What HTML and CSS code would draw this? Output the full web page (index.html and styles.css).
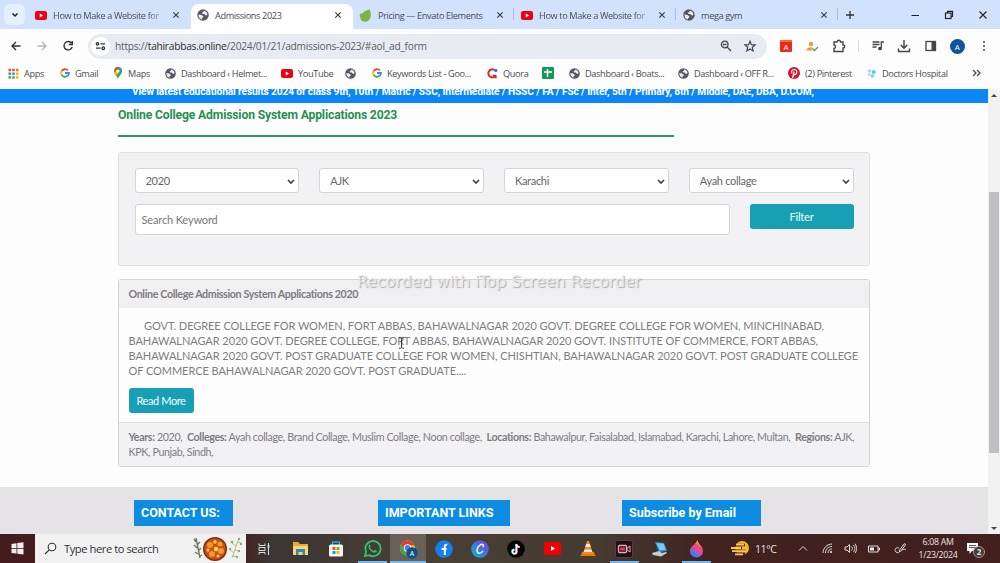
FILE: index.html
```html
<!DOCTYPE html>
<html lang="en">
<head>
    <meta charset="UTF-8">
    <meta name="viewport" content="width=device-width, initial-scale=1.0">
    <title>Admissions 2023</title>
    <link rel="stylesheet" href="styles.css">
</head>
<body>
    <!-- shared icons -->
    <svg class="sprite" width="0" height="0">
        <symbol id="youtube" viewBox="0 0 24 18"><rect width="24" height="18" rx="4" fill="#f00010"/><path d="M9.500 5v8l7-4z" fill="#fff"/></symbol>
        <symbol id="globe" viewBox="0 0 24 24"><circle cx="12" cy="12" r="11.500" fill="#55585c"/><path d="M3 11l6 1 4 3-1 2-2 1v3C5 20 2.500 16 3 11zM13 3c4 .5 7 3 8 7.500l-2 2.500-3-1-1-2h-4l-1-3 3-1z" fill="#e8edf7"/></symbol>
        <symbol id="google" viewBox="0 0 24 24" fill="none" stroke-width="4.400"><path d="M19 6A9.300 9.300 0 0 0 4 7.500" stroke="#ea4335"/><path d="M4 7.500a9.300 9.300 0 0 0 0 9" stroke="#fbbc05"/><path d="M4 16.500a9.300 9.300 0 0 0 14 2.500" stroke="#34a853"/><path d="M18 19a9 9 0 0 0 3.300-7H12" stroke="#4285f4"/></symbol>
        <symbol id="close" viewBox="0 0 10 10"><path d="M2.300 2.300l5.400 5.400M7.700 2.300l-5.400 5.400" stroke="#3c4043" stroke-width="1.200"/></symbol>
    </svg>

    <div class="tabs">
        <div class="tab-search"><svg width="8" height="6" viewBox="0 0 8 6"><path d="M1.500 1.500L4 4l2.500-2.500" fill="none" stroke="#222" stroke-width="1.500"/></svg></div>
        <div class="tab">
            <svg class="fav" width="12" height="9"><use href="#youtube"/></svg>
            <span class="tab-title fade">How to Make a Website for</span>
            <svg width="10" height="10"><use href="#close"/></svg>
        </div>
        <div class="tab active">
            <svg class="fav" width="12" height="12"><use href="#globe"/></svg>
            <span class="tab-title">Admissions 2023</span>
            <svg width="10" height="10"><use href="#close"/></svg>
        </div>
        <div class="tab line">
            <svg class="fav" width="13" height="13" viewBox="0 0 13 13"><path d="M10.500.5C12.500 3 12.800 11 8 12.500 4 13.500 1 11.500 1.500 8 2 4 6 1.500 10.500.5z" fill="#7cb342"/><path d="M.5 6l1.500-2 1 2-1.500 3z" fill="#7cb342"/></svg>
            <span class="tab-title">Pricing — Envato Elements</span>
            <svg width="10" height="10"><use href="#close"/></svg>
        </div>
        <div class="tab line">
            <svg class="fav" width="12" height="9"><use href="#youtube"/></svg>
            <span class="tab-title fade">How to Make a Website for</span>
            <svg width="10" height="10"><use href="#close"/></svg>
        </div>
        <div class="tab line">
            <svg class="fav" width="12" height="12"><use href="#globe"/></svg>
            <span class="tab-title">mega gym</span>
            <svg width="10" height="10"><use href="#close"/></svg>
        </div>
        <svg class="new-tab" width="10" height="10" viewBox="0 0 10 10"><path d="M5 1v8M1 5h8" stroke="#333" stroke-width="1.300"/></svg>
        <div class="window-buttons">
            <svg width="10" height="10" viewBox="0 0 10 10"><path d="M1.500 5.500h7.500" stroke="#222"/></svg>
            <svg width="10" height="10" viewBox="0 0 10 10" fill="none" stroke="#222" stroke-width="1.200"><rect x="1.500" y="3" width="5.500" height="5.500"/><path d="M3.500 3V1.300h5v5.200H7"/></svg>
            <svg width="10" height="10" viewBox="0 0 10 10"><path d="M1.500 1.500l7 7M8.500 1.500l-7 7" stroke="#222" stroke-width="1.100"/></svg>
        </div>
    </div>

    <div class="toolbar">
        <div class="nav">
            <svg width="12" height="12" viewBox="0 0 12 12" fill="none" stroke="#333" stroke-width="1.400"><path d="M10.500 6H2M6 2L2 6l4 4"/></svg>
            <svg width="12" height="12" viewBox="0 0 12 12" fill="none" stroke="#b0b3b7" stroke-width="1.300"><path d="M1.500 6H10M6 2l4 4-4 4"/></svg>
            <svg width="12" height="12" viewBox="0 0 12 12" fill="none" stroke="#333" stroke-width="1.400"><path d="M9.600 3.200A4.200 4.200 0 1 0 10.200 7M10.300 1v3.500H6.800"/></svg>
        </div>
        <div class="address">
            <span class="site-info"><svg width="11" height="10" viewBox="0 0 11 10" fill="none" stroke="#333" stroke-width="1.300"><circle cx="2.500" cy="2.800" r="1.200"/><path d="M5.500 2.800H10M1 7.200h4.500"/><circle cx="8.300" cy="7.200" r="1.300"/></svg></span>
            <span class="url">https://<b>tahirabbas.online</b>/2024/01/21/admissions-2023/#aol_ad_form</span>
            <svg width="12" height="12" viewBox="0 0 12 12" fill="none" stroke="#444" stroke-width="1.300"><circle cx="4.700" cy="4.500" r="3.300"/><path d="M7 7l4 4M3 4.500h3.400"/></svg>
            <svg class="star" width="12" height="12" viewBox="0 0 13 13" fill="none" stroke="#444" stroke-width="1.300"><path d="M6.500 1.300L8 5l4 .3-3 2.600.9 3.900-3.400-2.100-3.400 2.100L4 7.900 1 5.300 5 5z"/></svg>
        </div>
        <div class="extensions">
            <svg width="14" height="14" viewBox="0 0 14 14"><rect x="1" y="1" width="12" height="12" rx="1" fill="#e8291c"/><path d="M1 2h12" stroke="#f58a1f" stroke-width="1.500"/><text x="7" y="10.500" text-anchor="middle" font-size="8" fill="#fff">A</text></svg>
            <svg width="14" height="14" viewBox="0 0 14 14"><circle cx="6" cy="5" r="2.200" fill="#f29b2c"/><path d="M1.500 11.500c0-4.500 8-4.500 8 0z" fill="#f29b2c"/><path d="M7.500 9.500l2 2 3.500-3.500" fill="none" stroke="#fff" stroke-width="3"/><path d="M7.500 9.500l2 2 3.500-3.500" fill="none" stroke="#36a269" stroke-width="1.300"/></svg>
            <svg width="14" height="14" viewBox="0 0 14 14" fill="none" stroke="#444" stroke-width="1.400"><path d="M2 3h3c0-2.300 3.500-2.300 3.500 0H11v3c2.300 0 2.300 3 0 3v3.500H2V9.500c2 0 2-3.500 0-3.500z"/></svg>
            <i class="divider"></i>
            <svg width="14" height="14" viewBox="0 0 14 14" fill="none" stroke="#444" stroke-width="1.300"><path d="M1.500 3h7M1.500 5.500h7M1.500 8h4M10.300 9.500V3H13"/><circle cx="9" cy="9.500" r="1.200" fill="#444"/></svg>
            <svg width="14" height="14" viewBox="0 0 14 14" fill="none" stroke="#444" stroke-width="1.400"><path d="M7 1v8M3.700 6L7 9.200 10.300 6M1.500 9.500v3h11v-3"/></svg>
            <svg width="14" height="14" viewBox="0 0 14 14"><rect x="2" y="2.500" width="9.500" height="9" fill="none" stroke="#444" stroke-width="1.300"/><path d="M7.500 2.500h4v9h-4z" fill="#444"/></svg>
            <span class="avatar">A</span>
            <svg class="dots" width="4" height="12" viewBox="0 0 4 12" fill="#444"><circle cx="2" cy="2" r="1"/><circle cx="2" cy="6" r="1"/><circle cx="2" cy="10" r="1"/></svg>
        </div>
    </div>

    <div class="bookmarks">
        <span><svg width="11" height="11" viewBox="0 0 11 11"><path d="M.5 2h2.500" stroke="#ea4335" stroke-width="2.500"/><path d="M4.200 2h2.500" stroke="#ea4335" stroke-width="2.500"/><path d="M8 2h2.500" stroke="#f36c3c" stroke-width="2.500"/><path d="M.5 5.700h2.500" stroke="#34a853" stroke-width="2.500"/><path d="M4.200 5.700h2.500" stroke="#4285f4" stroke-width="2.500"/><path d="M8 5.700h2.500" stroke="#fbbc05" stroke-width="2.500"/><path d="M.5 9.400h2.500" stroke="#34a853" stroke-width="2.500"/><path d="M4.200 9.400h2.500" stroke="#55a055" stroke-width="2.500"/><path d="M8 9.400h2.500" stroke="#fbbc05" stroke-width="2.500"/></svg><em>Apps</em></span>
        <span><svg width="10" height="10"><use href="#google"/></svg><em>Gmail</em></span>
        <span><svg width="10" height="12" viewBox="0 0 10 12"><path d="M5 12C4 8.500 1 7.500 1 4a4 4 0 0 1 8 0c0 3.500-3 4.500-4 8z" fill="#34a853"/><path d="M1.900 1.500A4 4 0 0 1 6.500.3L3 5z" fill="#ea4335"/><path d="M6.500.3A4 4 0 0 1 9 4L6.500 4z" fill="#4285f4"/><path d="M1.300 5.500L4 3l2 3-3.300 2.500z" fill="#fbbc05"/><circle cx="5" cy="4" r="1.500" fill="#fff"/></svg><em>Maps</em></span>
        <span><svg width="11" height="11"><use href="#globe"/></svg><em>Dashboard ‹ Helmet...</em></span>
        <span><svg width="12" height="9"><use href="#youtube"/></svg><em>YouTube</em></span>
        <span><svg width="11" height="11"><use href="#globe"/></svg></span>
        <span><svg width="10" height="10"><use href="#google"/></svg><em>Keywords List - Goo...</em></span>
        <span><svg width="11" height="11" viewBox="0 0 11 11"><path d="M7.500 2A4 4 0 1 0 9 7M6 7l3.500 3" fill="none" stroke="#d32a2f" stroke-width="2"/><circle cx="8.800" cy="2.500" r="1.700" fill="#3b78e7"/></svg><em>Quora</em></span>
        <span><svg width="12" height="12" viewBox="0 0 12 12"><rect width="12" height="12" rx="1" fill="#159957"/><path d="M5.500 2v8M2 5h8" stroke="#fff" stroke-width="1.500"/></svg></span>
        <span><svg width="11" height="11"><use href="#globe"/></svg><em>Dashboard ‹ Boats...</em></span>
        <span><svg width="11" height="11"><use href="#globe"/></svg><em>Dashboard ‹ OFF R...</em></span>
        <span><svg width="12" height="12" viewBox="0 0 12 12"><circle cx="6" cy="6" r="6" fill="#d5122c"/><path d="M4.600 11l1.600-6.500M4 6.500C2.500 3.500 5 2.500 6.300 2.500c2.500 0 3 2 2.200 3.700-.7 1.700-2.300 1.700-2.800.7" fill="none" stroke="#fff" stroke-width="1.200"/></svg><em>(2) Pinterest</em></span>
        <span><svg width="11" height="11" viewBox="0 0 11 11"><circle cx="3.500" cy="3" r="1.800" fill="#8fe3e4"/><circle cx="7.800" cy="4" r="1.900" fill="#46cfe0"/><circle cx="6.500" cy="8" r="1.900" fill="#8cd9e8"/><circle cx="3.200" cy="6.500" r="1.500" fill="#efc0dc"/></svg><em>Doctors Hospital</em></span>
        <span><svg width="9" height="8" viewBox="0 0 9 8" fill="none" stroke="#444" stroke-width="1.200"><path d="M1 1l3 3-3 3M5 1l3 3-3 3"/></svg></span>
    </div>

    <div class="viewport">
        <div class="page">
            <div class="banner"><p>View latest educational results 2024 of class 9th, 10th / Matric / SSC, Intermediate / HSSC / FA / FSc / Inter, 5th / Primary, 8th / Middle, DAE, DBA, D.COM,</p></div>
            <div class="container">
                <h2>Online College Admission System Applications 2023</h2>
                <form class="filter">
                    <div class="select"><select><option>2020</option></select><svg width="8" height="6" viewBox="0 0 8 6"><path d="M1 1l3 3 3-3" /></svg></div>
                    <div class="select"><select><option>AJK</option></select><svg width="8" height="6" viewBox="0 0 8 6"><path d="M1 1l3 3 3-3" /></svg></div>
                    <div class="select"><select><option>Karachi</option></select><svg width="8" height="6" viewBox="0 0 8 6"><path d="M1 1l3 3 3-3" /></svg></div>
                    <div class="select"><select><option>Ayah collage</option></select><svg width="8" height="6" viewBox="0 0 8 6"><path d="M1 1l3 3 3-3" /></svg></div>
                    <div class="search-row">
                        <input type="text" placeholder="Search Keyword">
                        <button type="button" class="btn">Filter</button>
                    </div>
                </form>
                <div class="card">
                    <div class="card-header">Online College Admission System Applications 2020</div>
                    <div class="card-body">
                        <p><span class="indent">GOVT. DEGREE COLLEGE FOR WOMEN, FORT ABBAS, BAHAWALNAGAR 2020 GOVT. DEGREE COLLEGE FOR WOMEN, MINCHINABAD,</span><br>
                        BAHAWALNAGAR 2020 GOVT. DEGREE COLLEGE, FORT ABBAS, BAHAWALNAGAR 2020 GOVT. INSTITUTE OF COMMERCE, FORT ABBAS,<br>
                        BAHAWALNAGAR 2020 GOVT. POST GRADUATE COLLEGE FOR WOMEN, CHISHTIAN, BAHAWALNAGAR 2020 GOVT. POST GRADUATE COLLEGE<br>
                        OF COMMERCE BAHAWALNAGAR 2020 GOVT. POST GRADUATE....</p>
                        <button type="button" class="btn">Read More</button>
                    </div>
                    <div class="card-footer"><b>Years:</b> 2020,&nbsp; <b>Colleges:</b> Ayah collage, Brand Collage, Muslim Collage, Noon collage,&nbsp; <b>Locations:</b> Bahawalpur, Faisalabad, Islamabad, Karachi, Lahore, Multan,&nbsp; <b>Regions:</b> AJK,<br>KPK, Punjab, Sindh,</div>
                </div>
            </div>
            <div class="footer">
                <h3>CONTACT US:</h3>
                <h3>IMPORTANT LINKS</h3>
                <h3>Subscribe by Email</h3>
            </div>
        </div>
        <div class="scrollbar"><i class="up"></i><i class="thumb"></i><i class="down"></i></div>
        <div class="watermark">Recorded with iTop Screen Recorder</div>
        <svg class="cursor" width="7" height="12" viewBox="0 0 7 12" fill="none" stroke="#333"><path d="M1 .8h1.500l1 .7 1-.7H6M3.500 1.500v9M1 11.200h1.500l1-.7 1 .7H6"/></svg>
    </div>

    <div class="taskbar">
        <div class="start"><svg width="13" height="13" viewBox="0 0 13 13" fill="#eee"><path d="M.5 2l5-.8V6h-5zM6.300 1L12.500.2V6H6.300zM.5 6.800h5v4.800l-5-.7zM6.300 6.800h6.200v5.800l-6.200-.9z"/></svg></div>
        <div class="search">
            <svg width="13" height="13" viewBox="0 0 13 13" fill="none" stroke="#333" stroke-width="1.100"><circle cx="8" cy="5" r="3.800"/><path d="M5.200 7.800L1 12"/></svg>
            <span>Type here to search</span>
            <svg class="soup" width="50" height="27" viewBox="0 0 50 27">
                <path d="M3 3l4 20M3 7L1 4M4 10l3-3M4 13l-3-3M5 16l3-3M5 19l-3-2M6 22l3-2" stroke="#6b7a55" stroke-width="1.400"/>
                <path d="M46 3l-7 20M45 7l3 1M43 11l-4-3M42 15l4 1M41 18l-4-3M40 21l4 1" stroke="#b3bf86" stroke-width="1"/>
                <g fill="#94a862"><circle cx="46" cy="4" r="1.200"/><circle cx="48" cy="9" r="1.200"/><circle cx="39" cy="7" r="1.300"/><circle cx="46" cy="16" r="1.200"/><circle cx="37" cy="14" r="1.200"/><circle cx="44" cy="22" r="1.200"/></g>
                <circle cx="22" cy="14" r="12" fill="#7a2f1a"/><circle cx="22" cy="14" r="10.500" fill="#d04e14"/>
                <g fill="#f39a25"><circle cx="17" cy="10" r="3"/><circle cx="27" cy="9" r="2.500"/><circle cx="28" cy="16" r="3"/><circle cx="19" cy="19" r="3"/></g>
                <g fill="#ffd76a"><circle cx="22" cy="7" r="1.700"/><circle cx="23" cy="14" r="2.200"/><circle cx="15" cy="15" r="1.500"/><circle cx="25" cy="21" r="1.500"/></g>
            </svg>
        </div>
        <div class="apps">
            <span><svg width="14" height="12" viewBox="0 0 14 12" fill="none" stroke="#ddd"><path d="M2 .5v2h6v-2M2 11.500v-2h6v2M2 4.500h6v3H2zM11.500 0v12"/><path d="M10.500 3.500h2" stroke-width="2"/></svg></span>
            <span><svg width="17" height="15" viewBox="0 0 17 15"><path d="M1 1h5l2 2h8v11H1z" fill="#e8ac32"/><path d="M1 5h15v9H1z" fill="#ffd567"/><path d="M4 14V8h9v6h-2.500v-3h-4v3z" fill="#2b86d9"/></svg></span>
            <span><svg width="16" height="17" viewBox="0 0 16 17"><path d="M4.500 5V2h7v3" fill="none" stroke="#31a7e5" stroke-width="1.300"/><rect x="1" y="4.500" width="14" height="12" rx="1.500" fill="#f5f5f5"/><path d="M4.500 7h3v3h-3z" fill="#f25022"/><path d="M8.500 7h3v3h-3z" fill="#7fba00"/><path d="M4.500 11h3v3h-3z" fill="#00a4ef"/><path d="M8.500 11h3v3h-3z" fill="#ffb900"/></svg></span>
            <span class="open"><svg width="19" height="19" viewBox="0 0 20 20"><path d="M2 18l1.300-4.500A8 8 0 1 1 6.500 17z" fill="none" stroke="#2fc566" stroke-width="1.900"/><path d="M7 5.500l1.200 2.300-1 1.200c.8 1.700 2 2.800 3.800 3.500l1.200-1.300 2.300 1.200c-.3 2-2 2.300-3.500 1.800C8 13.200 6.500 11 6 9c-.4-1.600.1-2.800 1-3.500z" fill="#2fc566"/></svg></span>
            <span class="open current"><svg width="20" height="20" viewBox="0 0 20 20"><circle cx="9.500" cy="9" r="7.500" fill="#f4c430"/><path d="M3 5.300a7.500 7.500 0 0 1 13.500 1.200H9.500L6 11z" fill="#e8392f"/><path d="M3 5.300l6.500 11.200A7.500 7.500 0 0 1 3 5.300z" fill="#35a853"/><circle cx="9.500" cy="9" r="3.800" fill="#fff"/><circle cx="9.500" cy="9" r="2.900" fill="#4285f4"/><circle cx="14" cy="14" r="5.800" fill="#124f88"/><text x="14" y="16.500" text-anchor="middle" font-size="7" fill="#fff">A</text></svg></span>
            <span><svg width="18" height="18" viewBox="0 0 18 18"><circle cx="9" cy="9" r="8.800" fill="#1380ed"/><path d="M9.800 15V6.500c0-1.500.7-2 2.400-1.800M6.500 9h5" fill="none" stroke="#fff" stroke-width="2"/></svg></span>
            <span><svg width="18" height="18" viewBox="0 0 18 18"><defs><linearGradient id="canva" x1="0" y1="1" x2="1" y2="0"><stop stop-color="#00bfd0"/><stop offset=".45" stop-color="#397be0"/><stop offset="1" stop-color="#8138dc"/></linearGradient></defs><circle cx="9" cy="9" r="8.800" fill="url(#canva)"/><path d="M12 7c1.500-2.500-1-3.500-3-2C5.500 7.500 5 13 8 13.300c1.700.1 3-1 4-2.500" fill="none" stroke="#fff" stroke-width="1.400"/></svg></span>
            <span><svg width="18" height="18" viewBox="0 0 18 18" fill="none"><circle cx="9" cy="9" r="8.800" fill="#050505"/><path d="M9 4v7.500a2 2 0 1 1-2-2M9 4c.3 2 1.700 3 3.500 3" stroke="#25d6d6" stroke-width="1.800"/><path d="M10 4.500V12a2 2 0 1 1-2-2M10 4.500c.3 2 1.500 2.700 3 2.700" stroke="#ee2e57" stroke-width="1.600"/><path d="M9.500 4v7.700a2 2 0 1 1-2-2M9.500 4c.3 2 1.500 3 3.200 3" stroke="#fff" stroke-width="1.500"/></svg></span>
            <span><svg width="17" height="13" viewBox="0 0 17 13"><rect width="17" height="13" rx="2" fill="#f00000"/><path d="M7 4v5l4-2.500z" fill="#fff"/></svg></span>
            <span><svg width="16" height="17" viewBox="0 0 16 17"><path d="M2 12h12l1.500 4H.5z" fill="#ef7900"/><path d="M7 1h2l4 13H3z" fill="#f38a1b"/><path d="M6.200 4h3.600l1 3H5.200zM4.500 9.500h7l.8 2.500H3.700z" fill="#e8e8e8"/></svg></span>
            <span class="open"><svg width="18" height="18" viewBox="0 0 18 18"><rect x=".5" y=".5" width="17" height="17" rx="2" fill="#17151b" stroke="#7a2c33"/><rect x="3.500" y="5.500" width="8" height="7" rx="1" fill="none" stroke="#f3a5ac" stroke-width="1.300"/><path d="M12 8l3-2v6l-3-2z" fill="none" stroke="#f3a5ac"/><path d="M5 7.500h5v3H5z" fill="#e43c50"/></svg></span>
            <span><svg width="18" height="16" viewBox="0 0 18 16"><path d="M4 1l9 1 3 8-8 1z" fill="#2f8fd8"/><path d="M5.500 2l7 .8 2.300 6-6 .8z" fill="#76c8f7"/><path d="M1 12l7-2 3 2 4-1 1 1-6 3.500-8-1.500z" fill="#c3ccd3"/></svg></span>
            <span class="open"><svg width="15" height="18" viewBox="0 0 16 19"><defs><linearGradient id="drop" x1=".8" y1="0" x2=".3" y2="1"><stop offset=".1" stop-color="#ffcf34"/><stop offset=".35" stop-color="#ef4d65"/><stop offset=".65" stop-color="#d348b7"/><stop offset=".8" stop-color="#3f7bf0"/></linearGradient></defs><path d="M9 0c0 4 6 6.500 6 11.500a7 7 0 0 1-14 0C1 7 7 5 9 0z" fill="url(#drop)"/></svg></span>
        </div>
        <div class="tray">
            <svg width="19" height="17" viewBox="0 0 19 17" fill="none"><circle cx="11" cy="8" r="7" fill="#f8b62c"/><path d="M1 8h10M4 5h10M2 11h13M4 14h10" stroke="#452725" stroke-width="2.600"/><path d="M0 8h10M5 4.700h8M1 11.200h14M4 14.300h8" stroke="#ffc850" stroke-width="1.800"/></svg>
            <span class="temp">11°C</span>
            <svg width="10" height="7" viewBox="0 0 10 7" fill="none" stroke="#ddd"><path d="M1 5.500l4-4 4 4"/></svg>
            <svg width="11" height="11" viewBox="0 0 11 11" fill="none" stroke="#ddd"><path d="M1 10C1 5 5 1 10 1M3.500 10C3.500 6 6 3.500 10 3.500M6 10c0-2.500 1.500-4 4-4"/><circle cx="9" cy="9" r=".7" fill="#ddd"/></svg>
            <svg width="13" height="11" viewBox="0 0 13 11" fill="none" stroke="#ddd"><path d="M1 4h2l2.500-2.500v8L3 7H1zM7.500 3.500c1 1 1 3 0 4M9.300 2c2 2 2 5 0 7M11 .8c2 2.700 2 6.700 0 9.400"/></svg>
            <svg width="12" height="8" viewBox="0 0 12 8"><path d="M.5 1h9.500v6H.5zM10 3h1.500v2H10" fill="none" stroke="#ddd"/><path d="M2 2.500h4v3H2z" fill="#eee"/></svg>
            <svg width="13" height="13" viewBox="0 0 13 13" fill="none" stroke="#ddd"><path d="M5 9l5-7c1.500-1 2 .5 1 1.500L6.500 9.500zM5 6C1 5 0 8 2 10c2 1.500 3 .5 4-1M8 8c2-1 3-1 4 0"/></svg>
            <div class="clock">6:08 AM<br>1/23/2024</div>
            <div class="notice"><svg width="13" height="13" viewBox="0 0 13 13"><path d="M1 1h11v8H6l-2.500 3V9H1z" fill="#fff"/><path d="M3 3.500h7M3 5.500h7" stroke="#6b4c4a"/></svg><b>2</b></div>
        </div>
    </div>
</body>
</html>
```
FILE: styles.css
```css
* {
    box-sizing: border-box;
}
body {
    margin: 0;
    width: 1000px;
    height: 563px;
    overflow: hidden;
    display: flex;
    flex-direction: column;
    font-family: "Open Sans", sans-serif;
    font-size: 9.2px;
    color: #4a4d52;
    background: #fefdfe;
}
svg {
    display: block;
    flex: none;
}
.sprite {
    position: absolute;
}
/* browser tabs */
.tabs {
    height: 29px;
    display: flex;
    align-items: center;
    background: #d3e2fc;
    flex: none;
}
.tab-search {
    width: 21px;
    height: 21px;
    margin: 0 4px;
    border-radius: 6px;
    background: #e6effe;
    display: flex;
    align-items: center;
    justify-content: center;
}
.tab {
    width: 162px;
    height: 25px;
    margin-top: 4px;
    padding: 0 10px 3px 6px;
    display: flex;
    align-items: center;
    border-radius: 8px 8px 0 0;
}
.tab.active {
    background: #fefdff;
}
.tab.line {
    background: linear-gradient(#aebfdd, #aebfdd) no-repeat 160px 4px / 1px 12px;
}
.fav {
    margin-right: 6px;
}
.tab-title {
    flex: 1;
    white-space: nowrap;
    letter-spacing: -0.38px;
}
.fade {
    -webkit-mask-image: linear-gradient(90deg, #000 80%, transparent 98%);
    mask-image: linear-gradient(90deg, #000 80%, transparent 98%);
}
.new-tab {
    margin-left: 6px;
}
.window-buttons {
    margin-left: auto;
    margin-right: 12px;
    display: flex;
    gap: 24px;
}
/* address bar */
.toolbar {
    height: 34px;
    display: flex;
    align-items: center;
    flex: none;
}
.nav {
    width: 88px;
    padding-left: 10px;
    display: flex;
    gap: 14px;
}
.address {
    width: 679px;
    height: 25px;
    padding: 0 11px 0 3px;
    display: flex;
    align-items: center;
    background: #e9ebf3;
    border-radius: 13px;
}
.site-info {
    width: 19px;
    height: 19px;
    border-radius: 50%;
    background: #fefdff;
    display: flex;
    align-items: center;
    justify-content: center;
}
.url {
    flex: 1;
    padding-left: 5px;
    font-size: 10.2px;
    letter-spacing: -0.25px;
    color: #5a5d63;
}
.url b {
    font-weight: normal;
    color: #2b2d31;
}
.star {
    margin-left: 12px;
}
.extensions {
    flex: 1;
    padding: 0 14px 0 12px;
    display: flex;
    align-items: center;
    justify-content: space-between;
}
.dots {
    margin-left: 5px;
}
.divider {
    width: 1px;
    height: 12px;
    background: #cfdcf2;
}
.avatar {
    width: 15px;
    height: 15px;
    border-radius: 50%;
    background: #0e559c;
    color: #fff;
    font-size: 8px;
    line-height: 15px;
    text-align: center;
}
/* bookmarks bar */
.bookmarks {
    height: 26px;
    padding: 0 0 6px 8px;
    display: grid;
    grid-template-columns: 52px 53px 52px 116px 64px 27px 115px 55px 27px 109px 110px 78px 106px 20px;
    flex: none;
}
.bookmarks span {
    display: flex;
    align-items: center;
    gap: 5px;
    white-space: nowrap;
}
.bookmarks em {
    font-style: normal;
    letter-spacing: -0.35px;
}
/* web page */
.viewport {
    height: 445px;
    display: flex;
    position: relative;
    flex: none;
    font-family: Lato, sans-serif;
}
.page {
    width: 988px;
    overflow: hidden;
}
.banner {
    height: 14px;
    background: #0b86f8;
    overflow: hidden;
}
.banner p {
    margin: -4px 0 0 132px;
    font: bold 10.2px/14px Roboto, sans-serif;
    letter-spacing: -0.13px;
    color: #fff;
    white-space: nowrap;
}
.container {
    width: 752px;
    margin-left: 118px;
}
h2 {
    width: 556px;
    height: 34px;
    margin: 0 0 15px;
    border-bottom: 2px solid #32906a;
    padding-top: 4px;
    font: bold 12.2px/16px Roboto, sans-serif;
    letter-spacing: -0.17px;
    color: #279050;
}
.filter {
    height: 114px;
    padding: 15px 15.5px 0;
    background: #f2f1f3;
    border: 1px solid #e0e0e2;
    border-radius: 3px;
    display: grid;
    grid-template-columns: repeat(4, 1fr);
    grid-template-rows: 25px 31px;
    align-content: start;
    gap: 10.5px 20px;
}
.select {
    position: relative;
}
.select svg {
    position: absolute;
    right: 4px;
    top: 11px;
    fill: none;
    stroke: #444;
    stroke-width: 1.7;
}
select, input {
    width: 100%;
    height: 100%;
    padding: 0 10px;
    border: 1px solid #d5d5d8;
    border-radius: 3px;
    background: #fff;
    font: 11px Lato, sans-serif;
    letter-spacing: -0.3px;
    color: #666;
    appearance: none;
}
input {
    padding: 0 6px;
    letter-spacing: -0.15px;
}
input::placeholder {
    color: #777;
}
.search-row {
    grid-column: 1 / 5;
    display: flex;
    gap: 20px;
}
.btn {
    height: 25px;
    padding: 0 8px;
    border: none;
    border-radius: 3px;
    background: #17a0b5;
    color: #f4fdff;
    font: 11px Lato, sans-serif;
    letter-spacing: -0.2px;
}
.filter .btn {
    width: 104px;
    flex: none;
}
.card {
    height: 188px;
    margin-top: 13px;
    border: 1px solid #d3d2d5;
    border-radius: 3px;
    color: #7d7d80;
    font-size: 11px;
    line-height: 15px;
}
.card-header {
    height: 28px;
    padding: 6px 9.5px;
    background: #f0eff1;
    font-size: 10.7px;
    font-weight: bold;
    letter-spacing: -0.35px;
}
.card-body {
    height: 114px;
    padding: 10px 9.5px 0;
}
.card-body p {
    margin: 0 0 10px;
    letter-spacing: -0.06px;
    white-space: nowrap;
}
.card-body .btn {
    width: 65px;
    padding: 0;
    letter-spacing: -0.4px;
}
.indent {
    margin-left: 15.5px;
}
.card-footer {
    height: 44px;
    padding: 6px 9.5px;
    background: #f2f1f3;
    border-top: 1px solid #e0e0e2;
    font-size: 10.7px;
    letter-spacing: -0.37px;
    white-space: nowrap;
}
.footer {
    height: 60px;
    margin-top: 20px;
    padding: 13px 0 0 134px;
    background: #e5e3e6;
    display: grid;
    grid-template-columns: 244px 244px 244px;
    justify-items: start;
    align-items: start;
}
h3 {
    margin: 0;
    height: 26px;
    padding: 0 0 0 7px;
    background: #0c8de1;
    color: #fff;
    font: bold 12.5px/25px Roboto, sans-serif;
}
h3:nth-child(1) {
    width: 99px;
}
h3:nth-child(2) {
    width: 132px;
}
h3:nth-child(3) {
    width: 139px;
}
.scrollbar {
    width: 12px;
    padding: 5px 1px 4px;
    background: #f2f2f3;
    display: flex;
    flex-direction: column;
    align-items: center;
}
.up, .down {
    border: 3px solid transparent;
    border-top: 0;
    border-bottom: 3px solid #444;
}
.down {
    margin-top: auto;
    transform: rotate(180deg);
}
.thumb {
    width: 10px;
    height: 261px;
    margin-top: 95px;
    background: #bfbfc1;
}
.watermark {
    position: absolute;
    left: 357px;
    top: 182px;
    font: 16px/22px "DejaVu Sans", sans-serif;
    letter-spacing: -0.1px;
    color: rgba(236, 236, 238, 0.9);
    text-shadow: 1px 1px 1px #aaa;
    white-space: nowrap;
}
.cursor {
    position: absolute;
    left: 398px;
    top: 248px;
}
/* windows taskbar */
.taskbar {
    height: 29px;
    display: flex;
    align-items: center;
    color: #e8e4e4;
    background: linear-gradient(90deg, #451c1d 0, #43201f 24%, #3a3635 27%, #4a3f34 42%, #453b32 60%, #40221f 71%, #431f1e 100%);
    flex: none;
}
.start {
    width: 35px;
    display: flex;
    justify-content: center;
}
.search {
    width: 211px;
    height: 29px;
    padding: 0 3px 0 9px;
    background: #f2f1f2;
    color: #333;
    display: flex;
    align-items: center;
    font-size: 11.2px;
    letter-spacing: -0.45px;
    white-space: nowrap;
}
.search span {
    flex: 1;
    margin-left: 7px;
}
.apps {
    display: flex;
    height: 29px;
}
.apps span {
    width: 36px;
    display: flex;
    align-items: center;
    justify-content: center;
}
.apps .open {
    background: linear-gradient(#76b9ed, #76b9ed) no-repeat center bottom / 29px 2px;
}
.apps .current {
    background: linear-gradient(#76b9ed, #76b9ed) no-repeat center bottom / 36px 2px, #696158;
}
.tray {
    flex: 1;
    padding: 0 12px 0 17px;
    display: grid;
    grid-template-columns: 24px 43px 24px 22px 24px 26px 24px 50px 1fr;
    align-items: center;
}
.temp {
    font-size: 10.5px;
    letter-spacing: -0.4px;
}
.clock {
    width: 40px;
    font-size: 8.8px;
    letter-spacing: -0.3px;
    line-height: 13px;
    text-align: center;
    white-space: nowrap;
}
.notice {
    position: relative;
    left: -2px;
}
.notice b {
    position: absolute;
    left: 7px;
    top: 4px;
    width: 12px;
    height: 12px;
    border-radius: 50%;
    background: #493736;
    border: 1px solid #999;
    font-size: 8px;
    line-height: 10px;
    text-align: center;
}
```
